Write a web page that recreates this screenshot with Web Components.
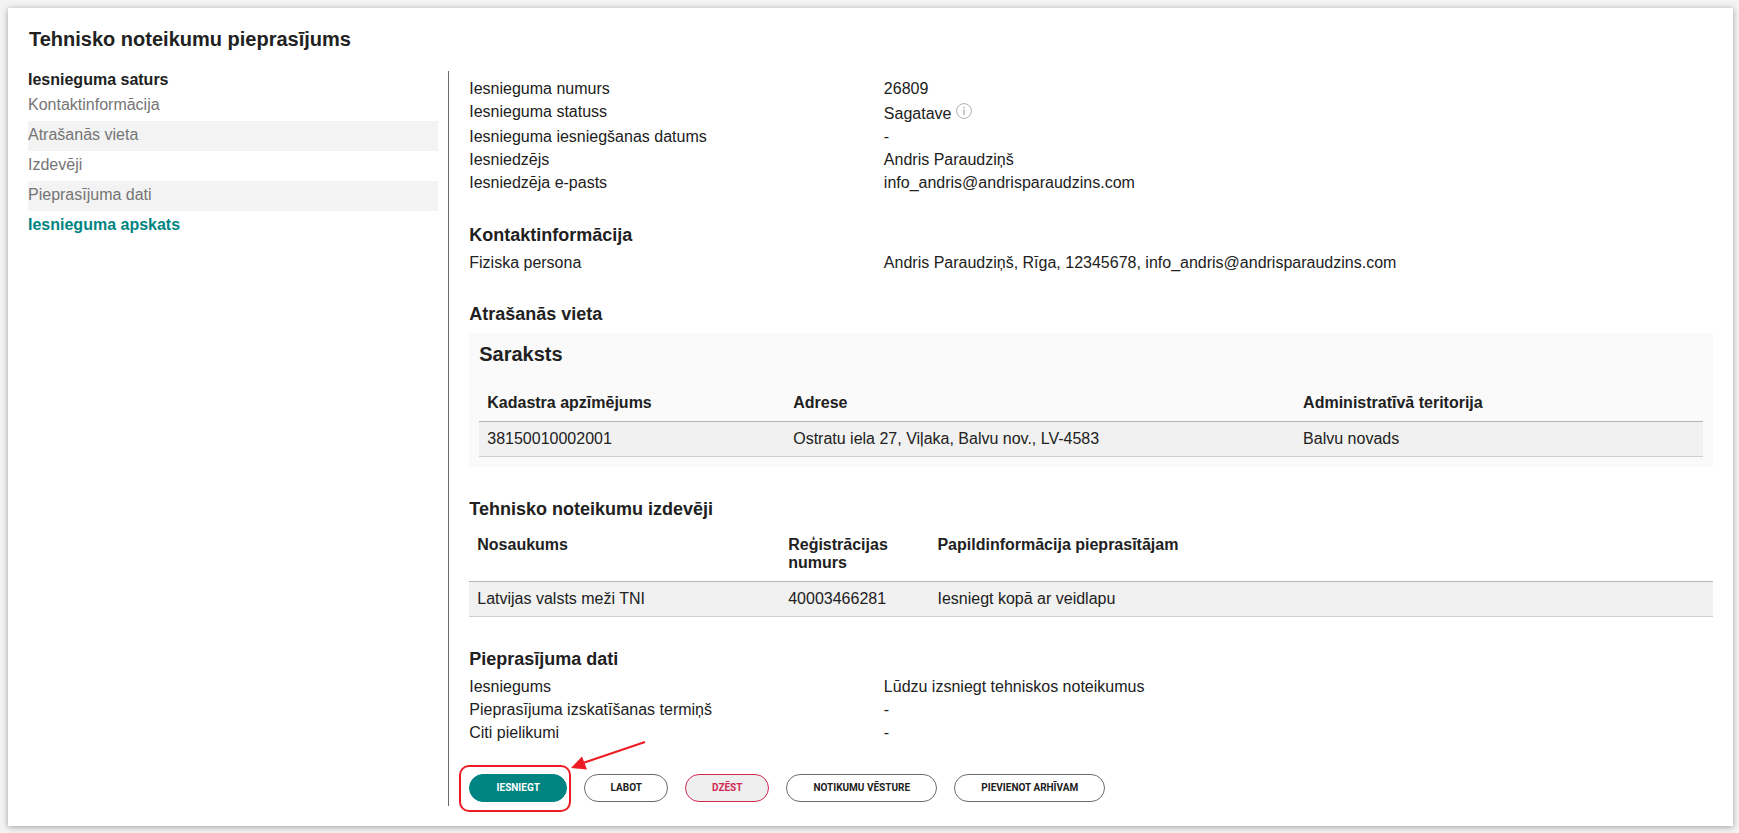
<!DOCTYPE html>
<html lang="lv">
<head>
<meta charset="utf-8">
<meta name="viewport" content="width=device-width, initial-scale=1">
<title>Tehnisko noteikumu pieprasījums</title>
<style>
  body { margin: 0; padding: 8px 6px 7px 8px; background: #f3f3f3; color: #212121; font: 16px/23px "Liberation Sans", Arial, sans-serif; }
</style>
</head>
<body>
<page-card heading="Tehnisko noteikumu pieprasījums">
  <side-nav slot="nav" heading="Iesnieguma saturs">
    <side-link>Kontaktinformācija</side-link>
    <side-link>Atrašanās vieta</side-link>
    <side-link>Izdevēji</side-link>
    <side-link>Pieprasījuma dati</side-link>
    <side-link current>Iesnieguma apskats</side-link>
  </side-nav>
  <form-section>
    <field-row label="Iesnieguma numurs">26809</field-row>
    <field-row label="Iesnieguma statuss">Sagatave <info-icon></info-icon></field-row>
    <field-row label="Iesnieguma iesniegšanas datums">-</field-row>
    <field-row label="Iesniedzējs">Andris Paraudziņš</field-row>
    <field-row label="Iesniedzēja e-pasts">info_andris@andrisparaudzins.com</field-row>
  </form-section>
  <form-section heading="Kontaktinformācija">
    <field-row label="Fiziska persona">Andris Paraudziņš, Rīga, 12345678, info_andris@andrisparaudzins.com</field-row>
  </form-section>
  <form-section heading="Atrašanās vieta">
    <list-panel heading="Saraksts">
      <data-table widths="25%,41.67%,33.33%" columns="Kadastra apzīmējums|Adrese|Administratīvā teritorija"
        values="38150010002001|Ostratu iela 27, Viļaka, Balvu nov., LV-4583|Balvu novads"></data-table>
    </list-panel>
  </form-section>
  <form-section heading="Tehnisko noteikumu izdevēji">
    <data-table widths="25%,12%,63%" columns="Nosaukums|Reģistrācijas numurs|Papildinformācija pieprasītājam"
      values="Latvijas valsts meži TNI|40003466281|Iesniegt kopā ar veidlapu"></data-table>
  </form-section>
  <form-section heading="Pieprasījuma dati">
    <field-row label="Iesniegums">Lūdzu izsniegt tehniskos noteikumus</field-row>
    <field-row label="Pieprasījuma izskatīšanas termiņš">-</field-row>
    <field-row label="Citi pielikumi">-</field-row>
  </form-section>
  <action-bar>
    <callout-ring><pill-button kind="primary">IESNIEGT</pill-button></callout-ring>
    <pill-button>LABOT</pill-button>
    <pill-button kind="danger">DZĒST</pill-button>
    <pill-button size="wide">NOTIKUMU VĒSTURE</pill-button>
    <pill-button size="wide">PIEVIENOT ARHĪVAM</pill-button>
  </action-bar>
</page-card>
<script>
const define = (name, render) => customElements.define(name, class extends HTMLElement {
  constructor() {
    super();
    this.attachShadow({ mode: "open" });
  }
  connectedCallback() {
    this.shadowRoot.innerHTML = render(this);
  }
});
const attr = (el, name) => el.getAttribute(name) || "";

define("page-card", el => `
  <style>
    :host { display: block; padding: 19px 20px 20px; background: #fff; box-shadow: 0 1px 6px rgba(0,0,0,.35); }
    h1 { margin: 0 0 20px; font-size: 20px; line-height: 24px; padding-left: 1px; }
    .columns { display: grid; grid-template-columns: 1fr 3fr; }
    aside { padding-right: 10px; border-right: 1px solid #6b6b6b; }
    main { display: flex; flex-direction: column; gap: 28px; padding: 6px 0 4px 20px; min-width: 0; }
  </style>
  <h1>${attr(el, "heading")}</h1>
  <div class="columns"><aside><slot name="nav"></slot></aside><main><slot></slot></main></div>`);

define("side-nav", el => `
  <style>
    :host { display: block; }
    h2 { margin: 0 0 2px; font-size: 16px; line-height: 18px; }
    ::slotted(:nth-child(even)) { background: #f3f3f3; }
  </style>
  <nav><h2>${attr(el, "heading")}</h2><slot></slot></nav>`);

define("side-link", el => `
  <style>
    :host { display: block; }
    a { display: block; padding: 2px 0 4px; line-height: 24px; color: #757575; text-decoration: none; }
    :host([current]) a { color: #008481; font-weight: bold; }
  </style>
  <a href="#"><slot></slot></a>`);

define("form-section", el => `
  <style>
    :host { display: block; }
    :host(:first-of-type) { padding-bottom: 1px; }
    h2 { margin: 0 0 4px; font-size: 18px; line-height: 24px; }
  </style>
  ${el.hasAttribute("heading") ? `<h2>${attr(el, "heading")}</h2>` : ""}<slot></slot>`);

define("field-row", el => `
  <style>
    :host { display: block; }
    dl { display: grid; grid-template-columns: 1fr 2fr; margin: 0; }
    dd { margin: 0; }
  </style>
  <dl><dt>${attr(el, "label")}</dt><dd><slot></slot></dd></dl>`);

define("info-icon", () => `
  <style>
    :host { display: inline-block; height: 20px; vertical-align: bottom; padding: 3px 0 2px; }
    svg { display: block; }
  </style>
  <svg width="16" height="16" viewBox="0 0 16 16" fill="none" stroke="#b0b0b0" role="img" aria-label="Info">
    <circle cx="8" cy="8" r="7.4"/><path stroke-width="1.4" d="M8 6.4v5.6M8 3.8v1.4"/>
  </svg>`);

define("list-panel", el => `
  <style>
    :host { display: block; margin: 7px 0 2px; padding: 9px 10px 8px; background: #fafafa; }
    h3 { margin: 0 0 17px; font-size: 20px; line-height: 24px; }
  </style>
  <h3>${attr(el, "heading")}</h3><slot></slot>`);

define("data-table", el => {
  const widths = attr(el, "widths").split(",");
  const cells = (name, tag) => attr(el, name).split("|").map(t => `<${tag}>${t}</${tag}>`).join("");
  return `
  <style>
    :host { display: block; padding: 2px 0; }
    table { width: 100%; table-layout: fixed; border-spacing: 0; line-height: 18px; text-align: left; }
    th, td { padding: 8px; vertical-align: top; }
    th { padding-top: 9px; padding-bottom: 9px; border-bottom: 1px solid #b3b3b3; }
    td { background: #f1f1f1; border-bottom: 1px solid #cfcfcf; }
  </style>
  <table>
    <colgroup>${widths.map(w => `<col style="width:${w}">`).join("")}</colgroup>
    <thead><tr>${cells("columns", "th")}</tr></thead>
    <tbody><tr>${cells("values", "td")}</tr></tbody>
  </table>`;
});

define("action-bar", () => `
  <style>:host { display: flex; flex-wrap: wrap; gap: 17px; padding-top: 2px; }</style><slot></slot>`);

define("pill-button", () => `
  <style>
    :host { display: block; }
    button { display: block; box-sizing: border-box; min-width: 84px; height: 28px; padding: 0 16px; border: 1px solid #6b6b6b; border-radius: 14px; background: #fff; color: #212121; font: bold 10px/26px Roboto, "Liberation Sans", sans-serif; white-space: nowrap; }
    :host([kind="primary"]) button { min-width: 98px; background: #008481; border-color: #008481; color: #fff; }
    :host([kind="danger"]) button { background: #efefef; border-color: #d12953; color: #d12953; }
    :host([size="wide"]) button { min-width: 151px; }
  </style>
  <button type="button"><slot></slot></button>`);

define("callout-ring", () => `
  <style>
    :host { display: block; position: relative; }
    .ring { position: absolute; inset: -9px -4px -10px -10px; border: 2px solid #ed1c24; border-radius: 10px; pointer-events: none; }
    svg { position: absolute; left: 100%; bottom: 100%; pointer-events: none; }
  </style>
  <slot></slot><div class="ring"></div>
  <svg width="80" height="36" viewBox="0 0 80 36" aria-hidden="true">
    <path d="M78 4L16 25" stroke="#ed1c24" stroke-width="2"/><path d="M4 30L15 18.5L20 31.5Z" fill="#ed1c24"/>
  </svg>`);
</script>
</body>
</html>
